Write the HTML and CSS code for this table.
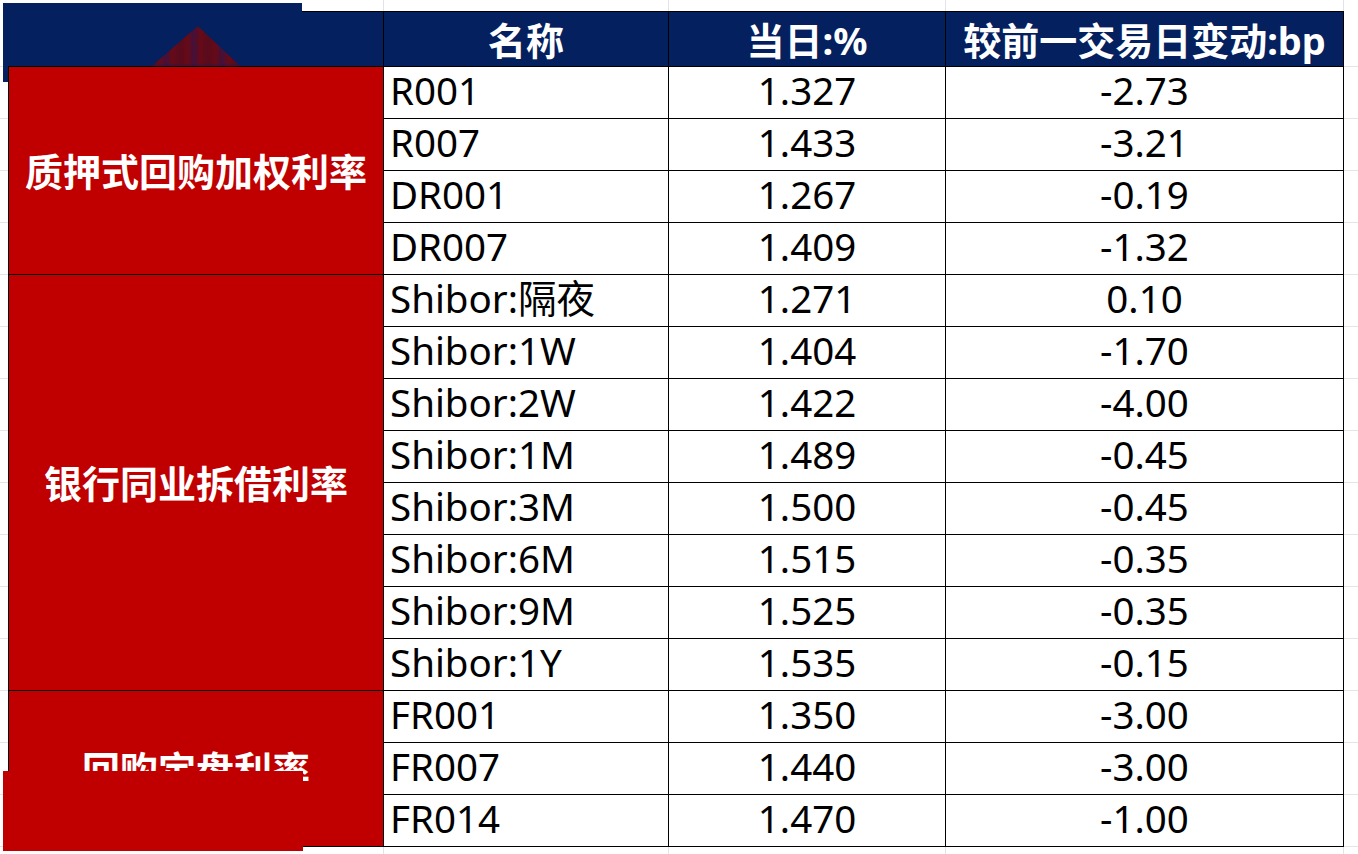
FILE: index.html
```html
<!DOCTYPE html>
<html lang="zh-CN">
<head>
<meta charset="utf-8">
<title>利率表</title>
<link rel="stylesheet" href="styles.css">
</head>
<body>
<div class="sheet">
  <div class="grid">
    <div class="hd hd-a"></div>
    <div class="hd">名称</div>
    <div class="hd">当日:%</div>
    <div class="hd">较前一交易日变动:bp</div>

    <div class="label g1">质押式回购加权利率</div>
    <div class="name">R001</div><div class="num">1.327</div><div class="num">-2.73</div>
    <div class="name">R007</div><div class="num">1.433</div><div class="num">-3.21</div>
    <div class="name">DR001</div><div class="num">1.267</div><div class="num">-0.19</div>
    <div class="name">DR007</div><div class="num">1.409</div><div class="num">-1.32</div>

    <div class="label g2">银行同业拆借利率</div>
    <div class="name">Shibor:隔夜</div><div class="num">1.271</div><div class="num">0.10</div>
    <div class="name">Shibor:1W</div><div class="num">1.404</div><div class="num">-1.70</div>
    <div class="name">Shibor:2W</div><div class="num">1.422</div><div class="num">-4.00</div>
    <div class="name">Shibor:1M</div><div class="num">1.489</div><div class="num">-0.45</div>
    <div class="name">Shibor:3M</div><div class="num">1.500</div><div class="num">-0.45</div>
    <div class="name">Shibor:6M</div><div class="num">1.515</div><div class="num">-0.35</div>
    <div class="name">Shibor:9M</div><div class="num">1.525</div><div class="num">-0.35</div>
    <div class="name">Shibor:1Y</div><div class="num">1.535</div><div class="num">-0.15</div>

    <div class="label g3">回购定盘利率</div>
    <div class="name">FR001</div><div class="num">1.350</div><div class="num">-3.00</div>
    <div class="name">FR007</div><div class="num">1.440</div><div class="num">-3.00</div>
    <div class="name">FR014</div><div class="num">1.470</div><div class="num">-1.00</div>
  </div>

  <div class="ov ov-blue"></div>
  <div class="ov ov-blue-strip"></div>
  <div class="ov ov-peak"></div>
  <div class="ov ov-red"></div>
</div>
</body>
</html>
```

FILE: styles.css
```css
html, body {
  margin: 0;
  padding: 0;
  background: #ffffff;
}

.sheet {
  position: relative;
  width: 1358px;
  height: 854px;
  overflow: hidden;
  padding: 11px 0 0 8px;
  box-sizing: border-box;
  background-color: #ffffff;
  background-image:
    linear-gradient(to right,
      transparent 383px, #e4e4e4 383px, #e4e4e4 384px,
      transparent 384px, transparent 668px, #e4e4e4 668px, #e4e4e4 669px,
      transparent 669px, transparent 945px, #e4e4e4 945px, #e4e4e4 946px,
      transparent 946px, transparent 1343px, #e4e4e4 1343px, #e4e4e4 1344px,
      transparent 1344px),
    repeating-linear-gradient(to bottom,
      transparent 0px, transparent 51px, #e4e4e4 51px, #e4e4e4 52px);
  background-position: 0 0, 0 15px;
}

.grid {
  display: grid;
  grid-template-columns: 374px 284px 276px 397px;
  grid-template-rows: 54px repeat(15, 51px);
  gap: 1px;
  padding: 1px;
  width: max-content;
  background: #000000;
  font-family: "Noto Sans", "Noto Sans CJK SC", sans-serif;
}

.grid > div {
  display: flex;
  align-items: center;
  white-space: nowrap;
  box-sizing: border-box;
}

.hd {
  background: #04205f;
  color: #ffffff;
  font-weight: 700;
  font-size: 38px;
  justify-content: center;
  padding-bottom: 2px;
  font-family: "Noto Sans", "Noto Sans CJK SC", sans-serif;
}

.name, .num {
  background: #ffffff;
  color: #000000;
  font-size: 38.5px;
  line-height: 1;
  padding-bottom: 4px;
}

.name {
  padding-left: 6px;
}

.num {
  justify-content: center;
}

.label {
  grid-column: 1;
  background: #c00000;
  color: #ffffff;
  font-weight: 700;
  font-size: 38px;
  justify-content: center;
  padding-bottom: 2px;
  font-family: "Noto Sans CJK SC", sans-serif;
}

.g1 { grid-row: 2 / span 4; }
.g2 { grid-row: 6 / span 8; }
.g3 { grid-row: 14 / span 3; }

.ov {
  position: absolute;
}

.ov-blue {
  left: 3px;
  top: 3px;
  width: 299px;
  height: 63px;
  background: #04205f;
}

.ov-blue-strip {
  left: 3px;
  top: 66px;
  width: 5px;
  height: 16px;
  background: #04205f;
}

.ov-peak {
  left: 152px;
  top: 26px;
  width: 88px;
  height: 40px;
  clip-path: polygon(52% 0, 100% 100%, 0 100%);
  background: repeating-linear-gradient(to right,
    #560b1e 0px, #6a0914 8px, #3c1240 14px, #6a0914 20px, #560b1e 28px);
  filter: blur(1.5px);
}

.ov-red {
  left: 3px;
  top: 771px;
  width: 300px;
  height: 80px;
  background: #c00000;
}
```
